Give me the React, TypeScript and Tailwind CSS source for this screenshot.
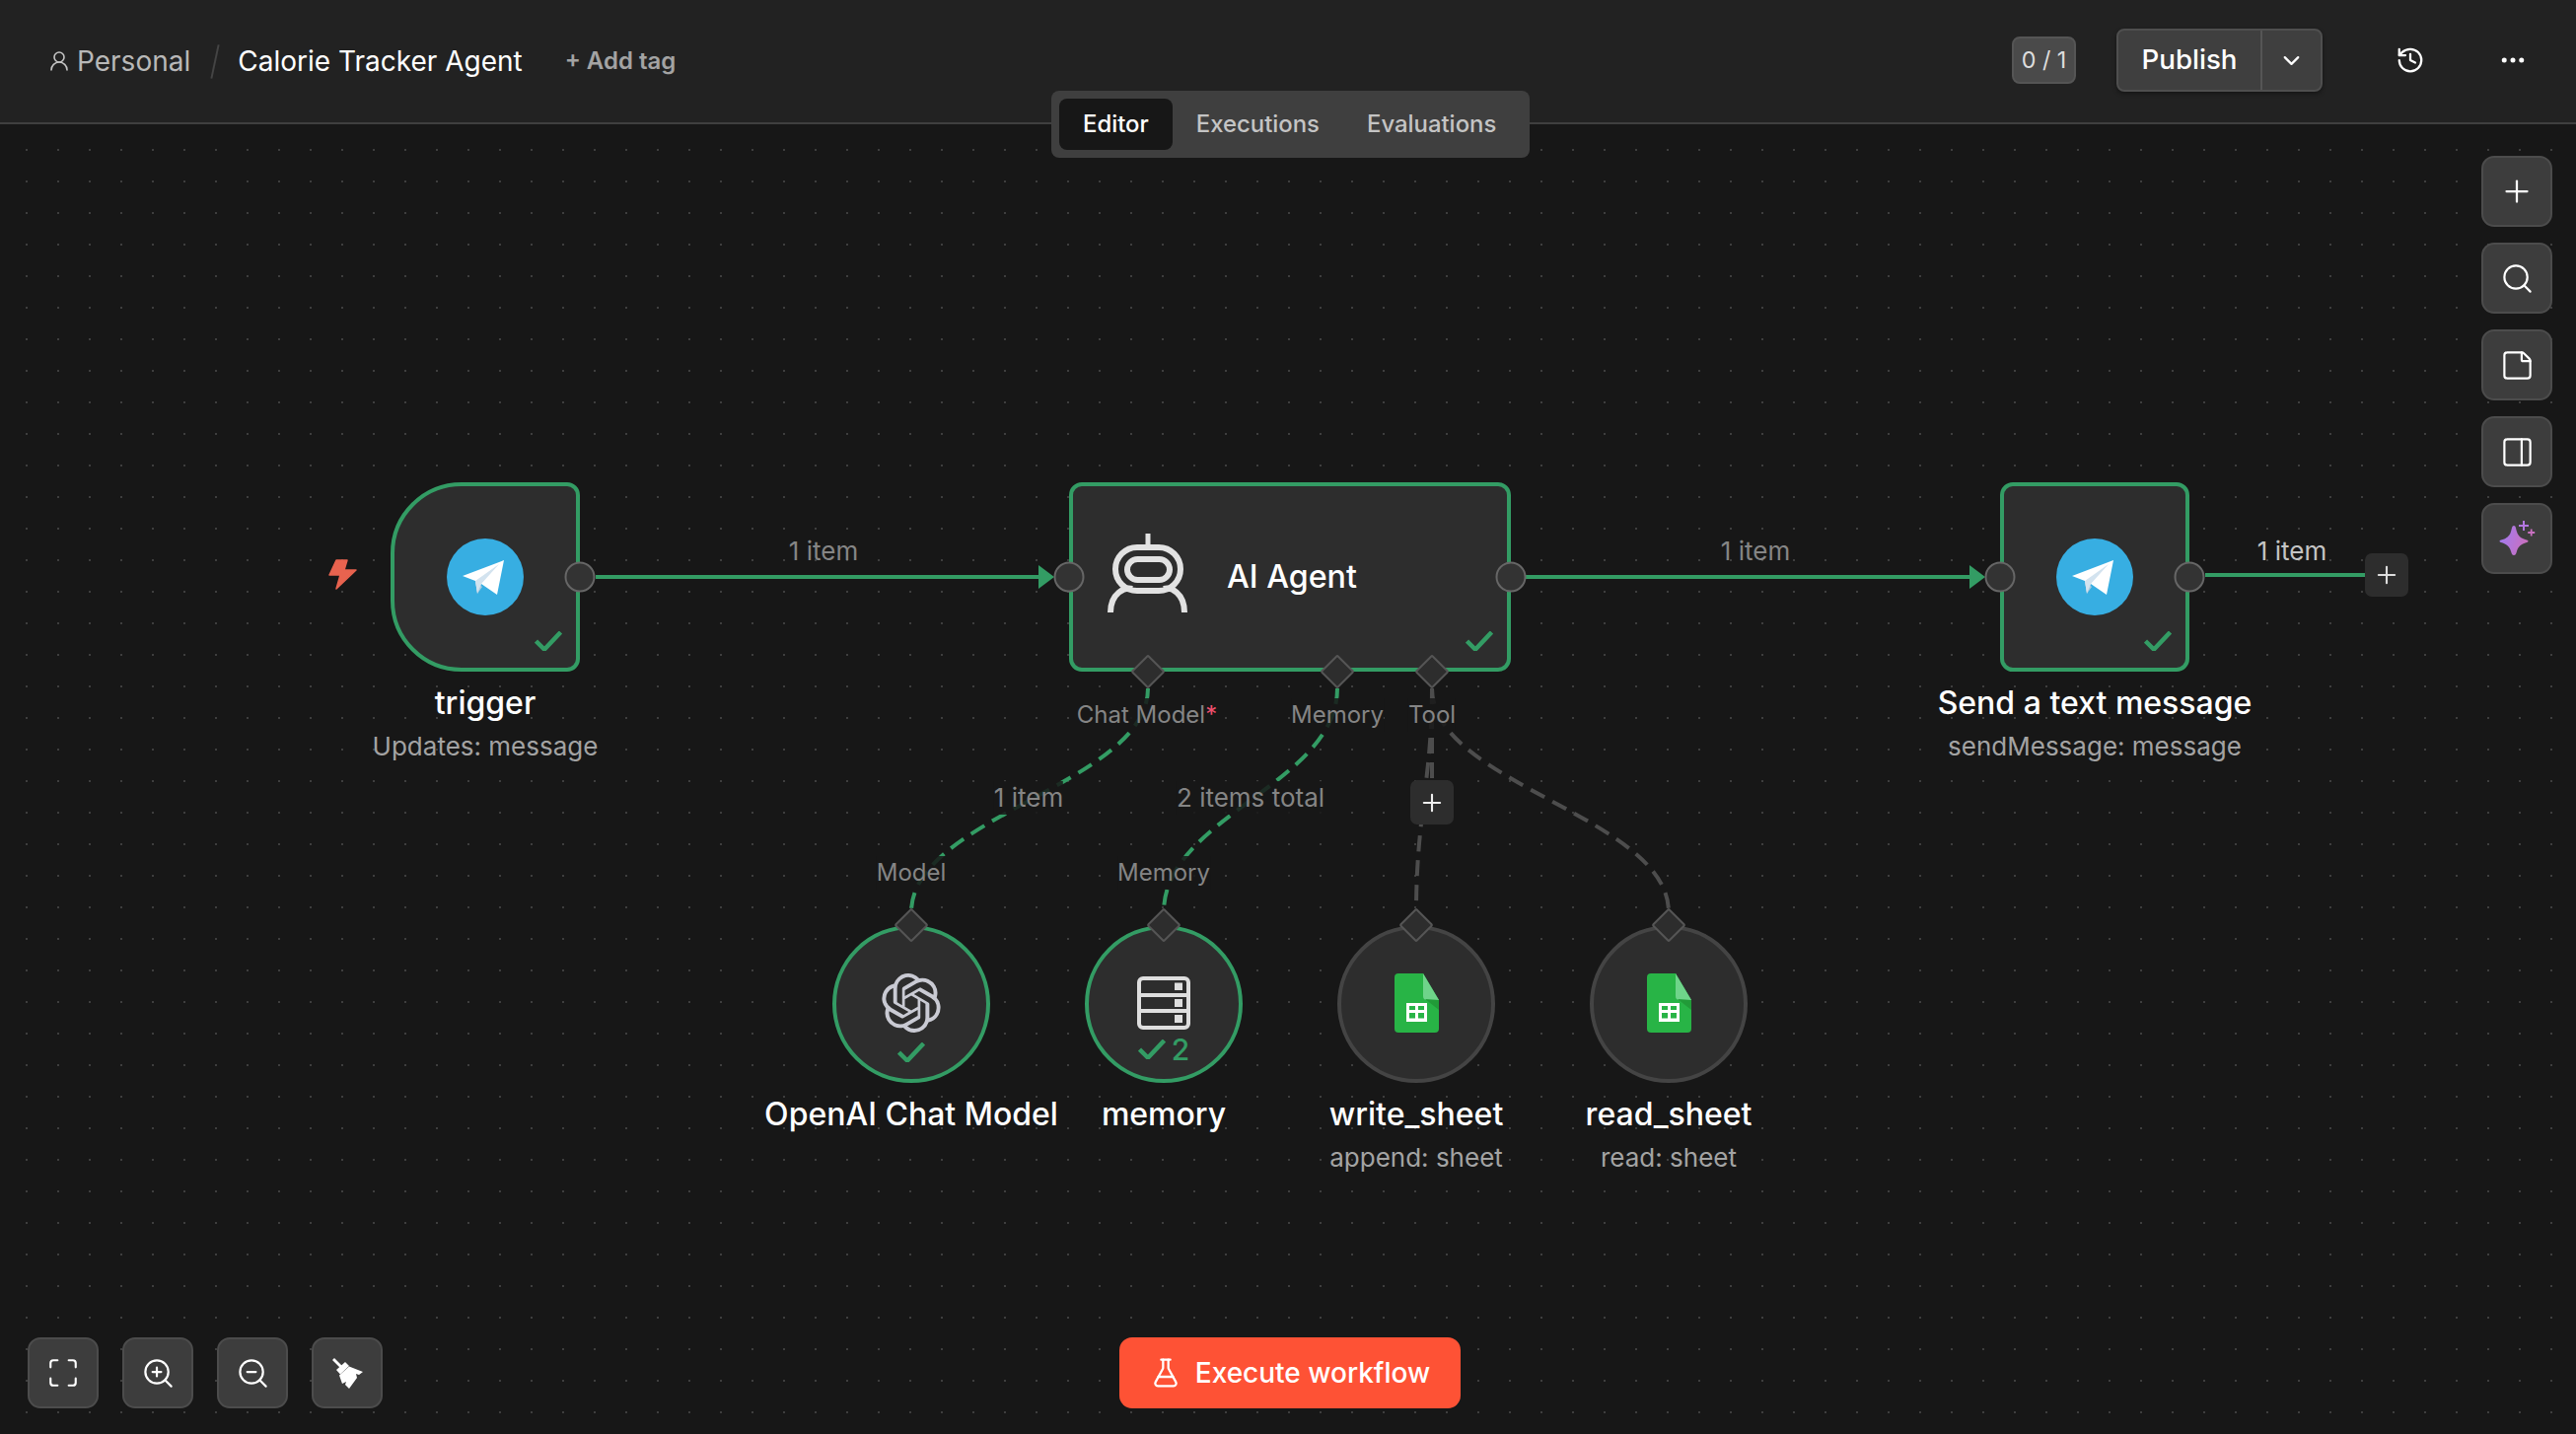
import { ChevronDown, Ellipsis, FlaskConical, History, Maximize, PanelRight, Plus, Search, StickyNote, UserRound, ZoomIn, ZoomOut } from 'lucide-react'
import { SiOpenai } from 'react-icons/si'
import type { ReactNode } from 'react'

const GREEN = '#339c64'
const GRAY_EDGE = '#4d4d4d'

function Telegram() {
  return (
    <svg viewBox="-39 -39 78 78" className="h-[78px] w-[78px]">
      <circle r="39" fill="#37aee2" />
      <path d="M-10 4 L-8 17 L-3 10 Z" fill="#a9c9dd" />
      <path d="M-10 4 L19 -17 L-4 7 L-8 17 Z" fill="#c8daea" />
      <path d="M19 -17 L-23 -1 L-10 4 L-4 7 L12 18 Z" fill="#fff" />
      <path d="M-10 4 L14 -13 L-4 7 L-8 16 Z" fill="#d3e3ef" />
    </svg>
  )
}

function Check({ className = '' }: { className?: string }) {
  return (
    <svg viewBox="0 0 28 20" fill="none" className={`h-[20px] w-[28px] ${className}`}>
      <path d="M1.500 10 L10 18.500 L26.500 1" stroke={GREEN} strokeWidth="4.500" />
    </svg>
  )
}

function Handle({ side }: { side: 'left' | 'right' }) {
  const place = side === 'left' ? 'left-[-4px] -translate-x-1/2' : 'right-[-4px] translate-x-1/2'
  return <div className={`absolute top-1/2 h-[31px] w-[31px] -translate-y-1/2 rounded-full border-[2.5px] border-[#666] bg-[#333] ${place}`} />
}

function Diamond({ className }: { className: string }) {
  return <div className={`absolute h-[25px] w-[25px] -translate-x-1/2 -translate-y-1/2 rotate-45 rounded-[2px] border-2 border-[#555] bg-[#2d2d2d] ${className}`} />
}

function Tag({ className, size = 'text-[26px]', children }: { className: string; size?: string; children: ReactNode }) {
  return (
    <div className={`absolute -translate-x-1/2 -translate-y-1/2 whitespace-nowrap leading-[34px] ${size} ${className}`}>
      {children}
    </div>
  )
}

function ToolButton({ children }: { children: ReactNode }) {
  return (
    <button className="flex h-[72px] w-[72px] items-center justify-center rounded-[13px] border-[2.5px] border-[#4c4c4c] bg-[#3d3d3d] text-white">
      {children}
    </button>
  )
}

function Sheet() {
  return (
    <svg viewBox="0 0 45 60" className="h-[60px] w-[45px]">
      <path d="M4 0 H29 L45 27 V56 a4 4 0 0 1 -4 4 H4 a4 4 0 0 1 -4 -4 V4 a4 4 0 0 1 4 -4 Z" fill="#28b446" />
      <path d="M29 0 L45 27 H33 a4 4 0 0 1 -4 -4 Z" fill="#6fd48a" />
      <path d="M31 26 L45 37 V27 Z" fill="#219b38" />
      <path d="M12 30 H33 V49 H12 Z M15 33 V37 H21 V33 Z M24 33 V37 H30 V33 Z M15 40 V45.5 H21 V40 Z M24 40 V45.5 H30 V40 Z" fill="#fff" fillRule="evenodd" />
    </svg>
  )
}

function NodeText({ title, sub }: { title: string; sub?: string }) {
  return (
    <>
      <div className="mt-[15px] whitespace-nowrap text-[32px] font-[450] leading-[34px]">{title}</div>
      {sub && <div className="mt-[10px] whitespace-nowrap text-[26px] leading-[34px] text-[#a3a3a3]">{sub}</div>}
    </>
  )
}

// square/rounded node with an icon in the middle
function SquareNode({ className, shape, trigger, title, sub }: { className: string; shape: string; trigger?: boolean; title: string; sub: string }) {
  return (
    <div className={`absolute flex w-[192px] flex-col items-center ${className}`}>
      <div className={`relative flex h-[192px] w-[192px] items-center justify-center border-[4px] border-[#339c64] bg-[#2d2d2d] ${shape}`}>
        <Telegram />
        <Check className="absolute bottom-[17px] right-[14px]" />
        {!trigger && <Handle side="left" />}
        <Handle side="right" />
      </div>
      <NodeText title={title} sub={sub} />
    </div>
  )
}

function SubNode({ className, done, icon, badge, title, sub }: { className: string; done?: boolean; icon: ReactNode; badge?: ReactNode; title: string; sub?: string }) {
  return (
    <div className={`absolute flex w-[160px] flex-col items-center ${className}`}>
      <div className={`relative flex h-[160px] w-[160px] flex-col items-center rounded-full border-[4px] bg-[#2d2d2d] pt-[45px] ${done ? 'border-[#339c64]' : 'border-[#444]'}`}>
        <Diamond className="left-1/2 top-[-4px]" />
        {icon}
        {badge}
      </div>
      <NodeText title={title} sub={sub} />
    </div>
  )
}

export default function App() {
  return (
    <div className="relative flex h-[1454px] w-[2612px] flex-col overflow-hidden bg-[#171717] [font-family:Inter,sans-serif] text-white">
      {/* Header */}
      <header className="flex h-[126px] shrink-0 items-center border-b-2 border-[#3f3f3f] bg-[#222] pb-[2px] pl-[48px] pr-[49px]">
        <div className="flex items-center pt-[2px]">
          <UserRound size={24} strokeWidth={1.6} className="text-[#c4c4c4]" />
          <span className="ml-[6px] text-[28px] text-[#b8b8b8]">Personal</span>
          <span className="ml-[24px] h-[35px] w-[2px] rotate-[12deg] bg-[#444]" />
          <span className="ml-[22px] text-[28px] text-white">Calorie Tracker Agent</span>
          <span className="ml-[43px] text-[24px] font-semibold text-[#a3a3a3]">+ Add tag</span>
        </div>
        <div className="ml-auto flex items-center">
          <span className="flex h-[48px] w-[65px] items-center justify-center rounded-[8px] border-2 border-[#555] bg-[#4a4a4a] text-[23.3px] text-[#ddd]">0 / 1</span>
          <div className="ml-[41px] flex h-[64px] w-[209px] rounded-[8px] border-2 border-[#4f4f4f] bg-[#3f3f3f] shadow-[0_2px_4px_#0006]">
            <span className="flex w-[144px] items-center justify-center text-[27.7px] font-medium">Publish</span>
            <span className="flex flex-1 items-center justify-center border-l-2 border-[#555]">
              <ChevronDown size={27} strokeWidth={2} />
            </span>
          </div>
          <History size={30} strokeWidth={1.8} className="ml-[74px]" />
          <Ellipsis size={30} strokeWidth={2} className="ml-[74px]" />
        </div>
      </header>

      {/* View tabs */}
      <div className="absolute left-[1066px] top-[92px] z-10 flex h-[68px] w-[485px] items-center rounded-[8px] bg-[#3f3f3f] p-[8px] text-[23.9px] font-medium text-[#c4c4c4]">
        <span className="flex h-full items-center rounded-[8px] bg-[#171717] px-[24px] text-white">Editor</span>
        <span className="px-[24px]">Executions</span>
        <span className="px-[24px]">Evaluations</span>
      </div>

      {/* Canvas */}
      <main className="relative flex-1 bg-[radial-gradient(#3e3e3e_1px,transparent_1.3px)] bg-[size:32px_32px] bg-[position:11px_10px]">
        <svg viewBox="0 126 2612 1328" fill="none" className="absolute inset-0 h-full w-full">
          <path d="M604 585 H1058" stroke={GREEN} strokeWidth="4" />
          <path d="M1053 573 L1069 585 L1053 597 Z" fill={GREEN} />
          <path d="M1547 585 H2000" stroke={GREEN} strokeWidth="4" />
          <path d="M1997 573 L2013 585 L1997 597 Z" fill={GREEN} />
          <path d="M2236 583 H2400" stroke={GREEN} strokeWidth="4" />
          <path d="M1164 698 C1164 795 924 828 924 925" stroke={GREEN} strokeWidth="4" strokeDasharray="16 9" />
          <path d="M1356 698 C1356 795 1180 828 1180 925" stroke={GREEN} strokeWidth="4" strokeDasharray="16 9" />
          <path d="M1452 698 C1452 790 1436 828 1436 925" stroke={GRAY_EDGE} strokeWidth="4" strokeDasharray="16 9" />
          <path d="M1452 698 V795" stroke={GRAY_EDGE} strokeWidth="4" strokeDasharray="16 9" />
          <path d="M1452 698 C1452 795 1692 828 1692 925" stroke={GRAY_EDGE} strokeWidth="4" strokeDasharray="16 9" />
          <path d="M341 568 H352 L349 578 H361 L341 597 L345 583 H334 Z" fill="#e8634f" stroke="#e8634f" strokeWidth="1.5" strokeLinejoin="round" />
        </svg>

        {/* Main nodes */}
        <SquareNode className="left-[396px] top-[363px]" shape="rounded-l-[72px] rounded-r-[13px]" trigger title="trigger" sub="Updates: message" />

        <div className="absolute left-[1084px] top-[363px] flex h-[192px] w-[448px] items-center gap-[40px] rounded-[13px] border-[4px] border-[#339c64] bg-[#2d2d2d] pl-[35px] text-[32.2px] font-[450]">
          <svg viewBox="0 0 81 80" fill="none" stroke="#e2e2e2" className="mb-[8px] h-[80px] w-[81px]">
            <path d="M41 0 V13" strokeWidth="5" />
            <rect x="8" y="14" width="66" height="44" rx="22" strokeWidth="6" />
            <rect x="20" y="26" width="43" height="21" rx="10.5" strokeWidth="6" />
            <path d="M3 80 C3 60 18 54 25 56 M78 80 C78 60 64 54 57 56" strokeWidth="6" />
          </svg>
          AI Agent
          <Check className="absolute bottom-[17px] right-[14px]" />
          <Handle side="left" />
          <Handle side="right" />
          <Diamond className="bottom-[-29px] left-[76px]" />
          <Diamond className="bottom-[-29px] left-[268px]" />
          <Diamond className="bottom-[-29px] left-[364px]" />
        </div>

        <SquareNode className="left-[2028px] top-[363px]" shape="rounded-[13px]" title="Send a text message" sub="sendMessage: message" />

        {/* Add buttons */}
        <div className="absolute left-[2398px] top-[435px] flex h-[44px] w-[44px] items-center justify-center rounded-[7px] bg-[#2d2d2d] text-[#ddd]"><Plus size={28} strokeWidth={1.8} /></div>
        <div className="absolute left-[1430px] top-[665px] flex h-[45px] w-[44px] items-center justify-center rounded-[7px] bg-[#2d2d2d] text-[#eee]"><Plus size={28} strokeWidth={1.8} /></div>

        {/* Sub nodes */}
        <SubNode
          className="left-[844px] top-[812px]"
          done
          icon={<SiOpenai size={60} className="text-[#c9cad3]" />}
          badge={<Check className="mt-[10px]" />}
          title="OpenAI Chat Model"
        />
        <SubNode
          className="left-[1100px] top-[812px]"
          done
          icon={
            <svg viewBox="0 0 54 54" fill="none" className="mt-[3px] h-[54px] w-[54px]">
              <rect x="2" y="2" width="50" height="50" rx="4" stroke="#dedede" strokeWidth="4" />
              <path d="M2 19 H52 M2 35 H52" stroke="#dedede" strokeWidth="4" />
              <path d="M38 6.5 H46 V14 H38 Z M38 23 H46 V31 H38 Z M38 39 H46 V47 H38 Z" fill="#dedede" />
            </svg>
          }
          badge={
            <div className="mt-[8px] flex items-center gap-[6px] text-[30px] font-medium leading-[24px] text-[#339c64]">
              <Check />2
            </div>
          }
          title="memory"
        />
        <SubNode className="left-[1356px] top-[812px]" icon={<Sheet />} title="write_sheet" sub="append: sheet" />
        <SubNode className="left-[1612px] top-[812px]" icon={<Sheet />} title="read_sheet" sub="read: sheet" />

        {/* Edge labels */}
        <Tag className="left-[835px] top-[433px] text-[#858585]">1 item</Tag>
        <Tag className="left-[1780px] top-[433px] text-[#858585]">1 item</Tag>
        <Tag className="left-[2324px] top-[433px] text-[#c4c4c4]">1 item</Tag>
        <Tag size="text-[24px]" className="left-[1163px] top-[599px] bg-[#171717]/85 text-[#858585]">Chat Model<span className="text-[#f0506e]">*</span></Tag>
        <Tag size="text-[24px]" className="left-[1356px] top-[599px] bg-[#171717]/85 text-[#858585]">Memory</Tag>
        <Tag size="text-[24px]" className="left-[1452px] top-[599px] bg-[#171717]/85 text-[#858585]">Tool</Tag>
        <Tag className="left-[1043px] top-[683px] bg-[#171717]/85 text-[#858585]">1 item</Tag>
        <Tag className="left-[1268px] top-[683px] bg-[#171717]/85 text-[#858585]">2 items total</Tag>
        <Tag size="text-[24px]" className="left-[924px] top-[759px] bg-[#171717]/85 text-[#858585]">Model</Tag>
        <Tag size="text-[24px]" className="left-[1180px] top-[759px] bg-[#171717]/85 text-[#858585]">Memory</Tag>

        {/* Right toolbar */}
        <div className="absolute right-[24px] top-[32px] flex flex-col gap-[16px]">
          <ToolButton><Plus size={36} strokeWidth={1.5} /></ToolButton>
          <ToolButton><Search size={35} strokeWidth={1.5} /></ToolButton>
          <ToolButton><StickyNote size={35} strokeWidth={1.5} /></ToolButton>
          <ToolButton><PanelRight size={35} strokeWidth={1.5} /></ToolButton>
          <ToolButton>
            <svg viewBox="0 0 40 40" className="h-[40px] w-[40px]">
              <defs>
                <linearGradient id="spark" x1="0" y1="0" x2="1" y2="0.3">
                  <stop offset="0" stopColor="#9d7cf5" />
                  <stop offset="1" stopColor="#c970c0" />
                </linearGradient>
              </defs>
              <path d="M17 7 C19 7 19 10 20 13 C21 17 24 20 30 21.5 C32 22 32 23.5 30 24 C24 25.5 21 29 20 33 C19 36 18.5 37 17 37 C15.500 37 15 36 14 33 C13 29 10 25.500 4 24 C2 23.500 2 22 4 21.500 C10 20 13 17 14 13 C15 10 15 7 17 7 Z" fill="url(#spark)" />
              <path d="M26 2 h2 v4 h4 v2 h-4 v4 h-2 v-4 h-4 v-2 h4 Z" fill="#b377e0" />
              <path d="M33.800 10.500 h1.800 v2.600 h2.600 v1.800 h-2.600 v2.600 h-1.800 v-2.600 h-2.600 v-1.800 h2.600 Z" fill="#c970c0" />
            </svg>
          </ToolButton>
        </div>

        {/* Bottom toolbar */}
        <div className="absolute bottom-[26px] left-[28px] flex gap-[24px]">
          <ToolButton><Maximize size={34} strokeWidth={1.5} /></ToolButton>
          <ToolButton><ZoomIn size={35} strokeWidth={1.5} /></ToolButton>
          <ToolButton><ZoomOut size={35} strokeWidth={1.5} /></ToolButton>
          <ToolButton>
            <svg viewBox="0 0 32 32" className="h-[32px] w-[32px]" fill="#fff">
              <path d="M1 3 L3 1 L11 9 L9 11 Z" />
              <path d="M5 13 L14 5 L18 9 L9 17.500 Z" />
              <path d="M8 18.500 L18 9.500 L32 15 L28 18 L25 17 L26 21 L18 32 L14 28 L15 25 L11 27 Z" />
            </svg>
          </ToolButton>
        </div>

        {/* Execute */}
        <button className="absolute bottom-[26px] left-[1135px] flex h-[72px] w-[346px] items-center justify-center gap-[14px] rounded-[13px] bg-[#fe5235] text-[28px] font-medium">
          <FlaskConical size={32} strokeWidth={1.7} />
          Execute workflow
        </button>
      </main>
    </div>
  )
}
